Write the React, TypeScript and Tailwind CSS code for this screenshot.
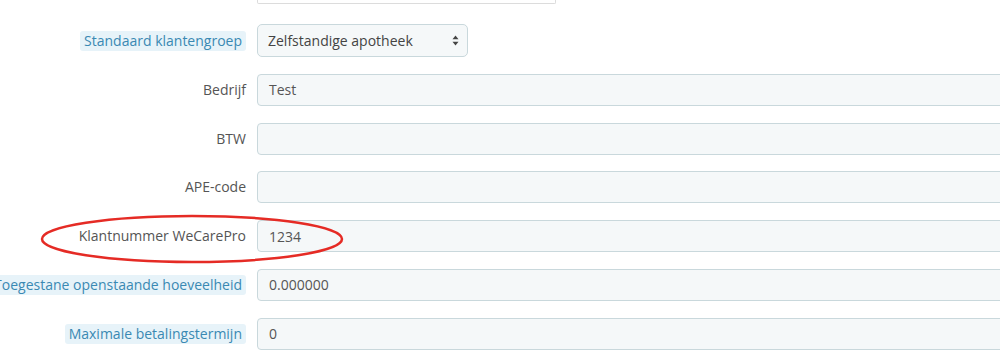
import React from 'react';

// Label: plain or with the light-blue "hint" badge
const FieldLabel = ({ text, hint }: { text: string; hint?: boolean }) => (
  <div className="w-[246px] shrink-0 flex justify-end items-center mr-[11px]">
    {hint ? (
      <span className="whitespace-nowrap bg-[#e7f3f9] text-[#3a89b3] rounded-[3px] px-[4px] leading-[20px]">
        {text}
      </span>
    ) : (
      <span className="whitespace-nowrap text-[#555] leading-[20px]">{text}</span>
    )}
  </div>
);

const TextRow = ({ label, value, hint }: { label: string; value?: string; hint?: boolean }) => (
  <div className="flex items-center h-[32px]">
    <FieldLabel text={label} hint={hint} />
    <div className="w-[800px] shrink-0 h-full bg-[#f5f8f9] border border-[#c9d8dc] rounded-[4px] px-[11px] flex items-center text-[#555]">
      {value}
    </div>
  </div>
);

export default function App() {
  return (
    <div
      className="relative w-[1000px] h-[364px] overflow-hidden bg-white text-[14px]"
      style={{ fontFamily: '"Open Sans", "Noto Sans", sans-serif' }}
    >
      {/* bottom of the field above, cut off by the screenshot */}
      <div className="ml-[257px] w-[299px] h-[4px] bg-white border-x border-b border-[#dcdcdc] rounded-b-[2px]" />

      <div className="flex flex-col gap-[16.8px] mt-[20px]">
        <div className="flex items-center h-[33px]">
          <FieldLabel text="Standaard klantengroep" hint />
          <div className="w-[211px] shrink-0 h-full bg-[#f5f8f9] border border-[#c9d8dc] rounded-[5px] pl-[10px] pr-[8px] flex items-center justify-between text-[#444]">
            <span>Zelfstandige apotheek</span>
            <svg width="7" height="11" viewBox="0 0 7 11" className="text-[#444]">
              <path d="M3.5 0.5 L6.5 4.2 H0.5 Z" fill="currentColor" />
              <path d="M3.5 10.5 L6.5 6.8 H0.5 Z" fill="currentColor" />
            </svg>
          </div>
        </div>

        <TextRow label="Bedrijf" value="Test" />
        <TextRow label="BTW" />
        <TextRow label="APE-code" />
        <TextRow label="Klantnummer WeCarePro" value="1234" />
        <TextRow label="Toegestane openstaande hoeveelheid" value="0.000000" hint />
        <TextRow label="Maximale betalingstermijn" value="0" hint />
      </div>

      {/* red annotation ring */}
      <svg className="absolute left-0 top-0 pointer-events-none" width="1000" height="364">
        <ellipse cx="192" cy="239" rx="150" ry="23" fill="none" stroke="#e52b25" strokeWidth="2.5" />
      </svg>
    </div>
  );
}
